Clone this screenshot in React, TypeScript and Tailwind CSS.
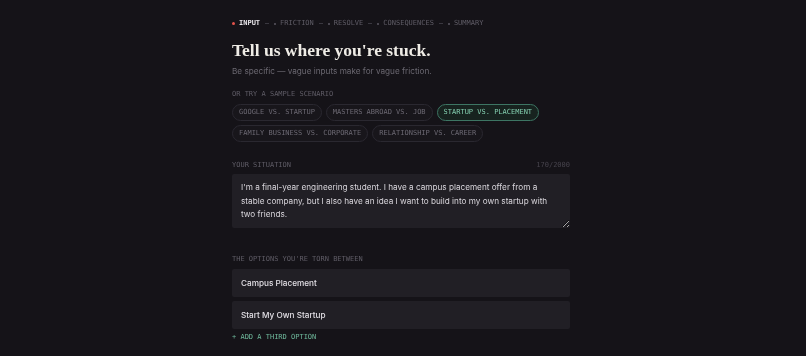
import React from "react"

const mono = "font-['DejaVu_Sans_Mono',monospace]"
const sans = "font-['Inter','Noto_Sans',sans-serif]"

const steps = ["INPUT", "FRICTION", "RESOLVE", "CONSEQUENCES", "SUMMARY"]

const scenarios = [
  { label: "GOOGLE VS. STARTUP", active: false },
  { label: "MASTERS ABROAD VS. JOB", active: false },
  { label: "STARTUP VS. PLACEMENT", active: true },
  { label: "FAMILY BUSINESS VS. CORPORATE", active: false },
  { label: "RELATIONSHIP VS. CAREER", active: false },
]

const situation =
  "I'm a final-year engineering student. I have a campus placement offer from a stable company, but I also have an idea I want to build into my own startup with two friends."

const App: React.FC = () => {
  return (
    <div className={`min-h-[356px] w-full bg-[#151318] ${sans} [color-scheme:dark]`}>
      <div className="mx-auto w-[342px] pr-[4px] pt-[18px] pb-4">
        {/* step progress */}
        <div className={`flex items-center gap-[5px] ${mono} text-[7px] leading-[11px]`}>
          {steps.map((step, i) => (
            <React.Fragment key={step}>
              {i > 0 && <span className="h-px w-[4px] bg-[#3a3840]" />}
              <span className="flex items-center gap-[4px]">
                <span
                  className={
                    i === 0
                      ? "h-[3px] w-[3px] rounded-full bg-[#e5534b]"
                      : "h-[2px] w-[2px] rounded-full bg-[#5a5760]"
                  }
                />
                <span className={i === 0 ? "font-bold text-[#e8e5ea]" : "text-[#5f5c66]"}>{step}</span>
              </span>
            </React.Fragment>
          ))}
        </div>

        <h1 className="mt-[10px] font-['Liberation_Serif',serif] text-[17.5px] leading-[22px] font-bold text-[#efece6]">
          Tell us where you're stuck.
        </h1>
        <p className="mt-[4px] text-[8.2px] leading-[13px] text-[#6b6871]">
          Be specific — vague inputs make for vague friction.
        </p>

        <div className={`mt-[11px] ${mono} text-[7px] leading-[11px] text-[#5f5c66]`}>
          OR TRY A SAMPLE SCENARIO
        </div>
        <div className="mt-[4px] flex flex-wrap gap-[4px]">
          {scenarios.map((s) => (
            <button
              key={s.label}
              className={`h-[17px] rounded-full border px-[6px] ${mono} text-[7px] ${
                s.active
                  ? "border-[#3d7563] bg-[#17231f] text-[#84cfb0]"
                  : "border-[#2a2830] bg-[#18161b] text-[#6c6973]"
              }`}
            >
              {s.label}
            </button>
          ))}
        </div>

        <div className={`mt-[18px] flex justify-between ${mono} text-[7px] leading-[11px]`}>
          <span className="text-[#5f5c66]">YOUR SITUATION</span>
          <span className="text-[#46434c]">170/2000</span>
        </div>
        <textarea
          readOnly
          defaultValue={situation}
          className="mt-[3px] block h-[54px] w-full resize-y rounded-[2px] bg-[#211f25] px-[9px] py-[7px] text-[8.2px] leading-[13.5px] text-[#d9d6dc] outline-none"
        />

        <div className={`mt-[26px] ${mono} text-[7px] leading-[11px] text-[#5f5c66]`}>
          THE OPTIONS YOU'RE TORN BETWEEN
        </div>
        <div className="mt-[4px] flex flex-col gap-[4px]">
          {["Campus Placement", "Start My Own Startup"].map((opt) => (
            <input
              key={opt}
              readOnly
              defaultValue={opt}
              className="block h-[28px] w-full rounded-[2px] bg-[#211f25] px-[9px] text-[8.2px] font-medium text-[#e2dfe5] outline-none"
            />
          ))}
        </div>
        <div className={`mt-[3px] ${mono} text-[7px] leading-[11px] text-[#6fb99c]`}>
          + ADD A THIRD OPTION
        </div>
      </div>
    </div>
  )
}

export default App
